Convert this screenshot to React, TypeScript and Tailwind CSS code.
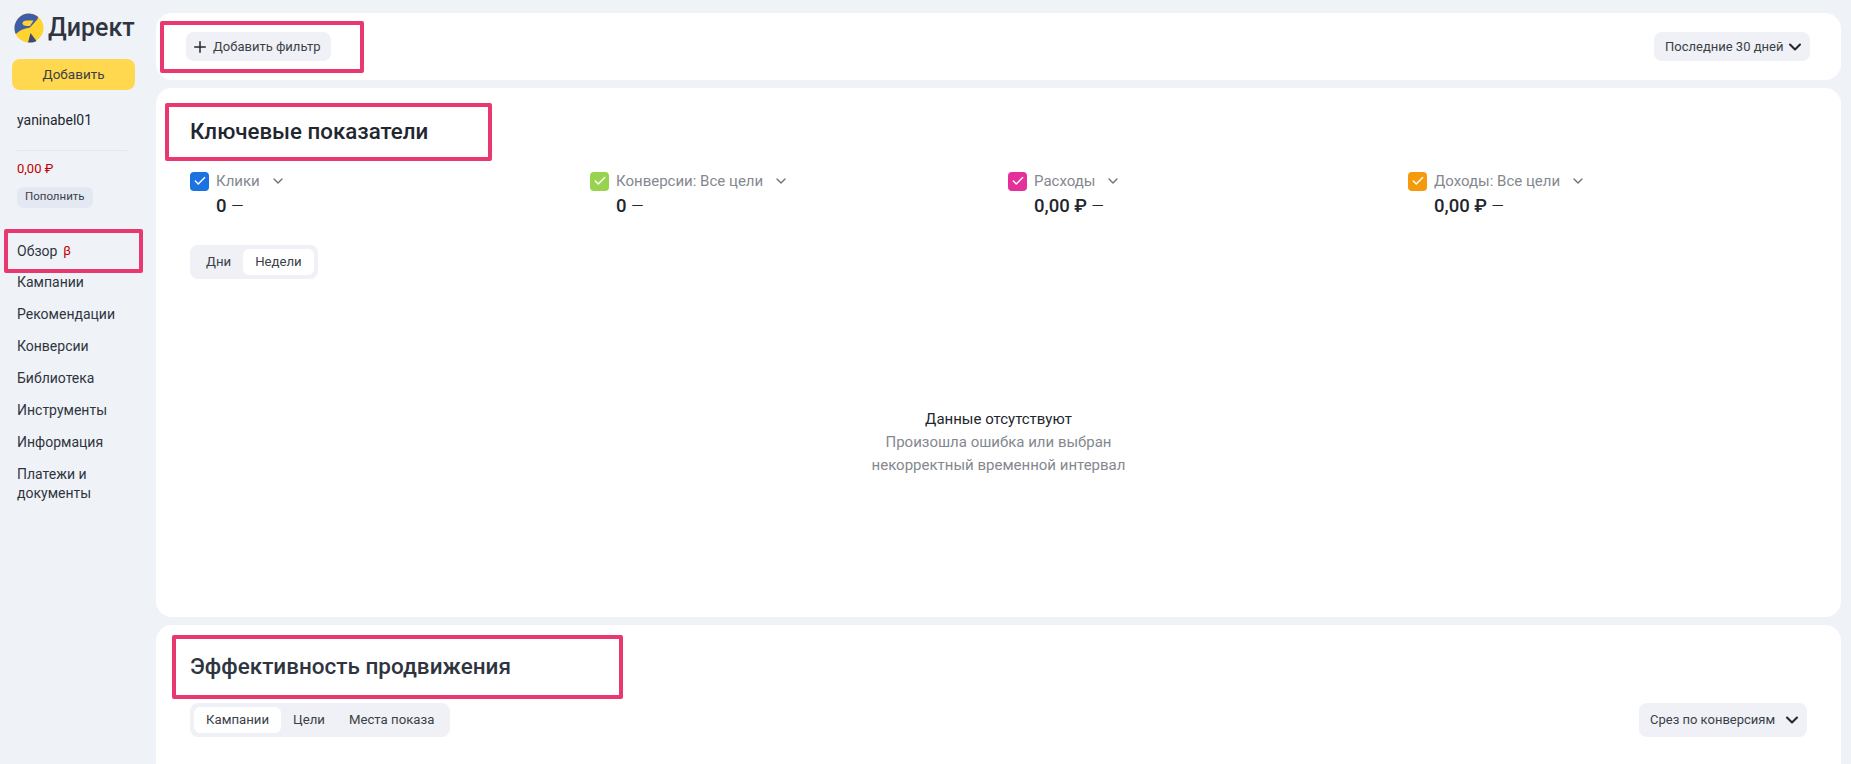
import { Check, ChevronDown, Plus } from 'lucide-react';

const navItems = ['Кампании', 'Рекомендации', 'Конверсии', 'Библиотека', 'Инструменты', 'Информация'];

const metrics = [
  { label: 'Клики', value: '0', color: 'bg-[#1a73e0]', width: 'w-[400px]' },
  { label: 'Конверсии: Все цели', value: '0', color: 'bg-[#97d34f]', width: 'w-[418px]' },
  { label: 'Расходы', value: '0,00 ₽', color: 'bg-[#e5309b]', width: 'w-[400px]' },
  { label: 'Доходы: Все цели', value: '0,00 ₽', color: 'bg-[#f59a0c]', width: 'w-[400px]' },
];

function Logo() {
  return (
    <svg viewBox="0 0 30 30" className="w-[30px] h-[30px] shrink-0">
      <circle cx="15" cy="15" r="14.5" fill="#ffd42e" />
      <path d="M15 .5A14.500 14.500 0 0 0 .7 17.500C.9 19 1.300 20 1.800 21 5 17.500 10 15.500 16 14.500l5-5.500C24 6 24.500 5 23.500 3.300A14.500 14.500 0 0 0 15 .5Z" fill="#3f5ca8" />
      <path d="M19.500 7.500H13c-3 0-4.500 1.300-4.500 2.800s1.500 2.700 4.500 2.700h3Z" fill="#ffd42e" />
      <path d="M14 29.400c3 .5 6 0 8.500-1.500L16.500 20Z" fill="#3d4a78" />
    </svg>
  );
}

function Segments({ items, active }: { items: string[]; active: string }) {
  return (
    <div className="flex items-center h-[34px] p-[4px] rounded-lg bg-[#eff1f7] w-fit">
      {items.map((item) => (
        <div
          key={item}
          className={`h-[26px] px-[12px] flex items-center rounded-md text-[13.2px] text-[#3b3f46] ${
            item === active ? 'bg-white' : ''
          }`}
        >
          {item}
        </div>
      ))}
    </div>
  );
}

function Select({ label, className }: { label: string; className: string }) {
  return (
    <div className={`flex items-center justify-between rounded-lg bg-[#eff1f7] text-[13px] text-[#3b3f46] whitespace-nowrap pl-[11px] pr-[5px] ${className}`}>
      <span>{label}</span>
      <ChevronDown className="w-[20px] h-[20px] text-[#22262e]" strokeWidth={2.5} />
    </div>
  );
}

function Annotation({ className }: { className: string }) {
  return <div className={`absolute border-[4px] border-[#e8386f] rounded-[2px] pointer-events-none ${className}`} />;
}

export default function App() {
  return (
    <div className="relative flex h-[764px] w-full overflow-hidden bg-[#eff3f8] font-['Roboto',sans-serif] text-[#22262e]">
      <aside className="w-[156px] shrink-0 pt-[13px] pl-[12px]">
        <div className="flex items-center gap-[4px] pl-[2px] h-[29px]">
          <Logo />
          <span className="text-[25px] font-medium text-[#2f3540]">Директ</span>
        </div>
        <div className="mt-[17px] w-[123px] h-[31px] rounded-lg bg-[#ffd84f] flex items-center justify-center text-[13.5px] text-[#3b3f46]">
          Добавить
        </div>
        <div className="mt-[20px] pl-[5px] text-[14px]">yaninabel01</div>
        <div className="mt-[19px] ml-[5px] w-[110px] h-px bg-[#e3e8f0]" />
        <div className="mt-[8px] pl-[5px] text-[13px] text-[#c00000]">0,00 ₽</div>
        <div className="mt-[8px] ml-[5px] w-fit h-[21px] px-[8px] rounded-md bg-[#e4e8f3] flex items-center text-[11.5px] text-[#3b3f46]">
          Пополнить
        </div>
        <nav className="mt-[28px] pl-[5px] text-[14px] text-[#2f3540]">
          <div className="h-[31px] flex items-center gap-[6px]">
            Обзор <span className="text-[#c00000] text-[13px]">β</span>
          </div>
          {navItems.map((item) => (
            <div key={item} className="h-[32px] flex items-center">
              {item}
            </div>
          ))}
          <div className="mt-[6px] leading-[19px]">
            Платежи и
            <br />
            документы
          </div>
        </nav>
      </aside>

      <main className="w-[1685px] shrink-0 pt-[13px] flex flex-col gap-[8px]">
        <section className="h-[67px] shrink-0 rounded-2xl bg-white pl-[30px] pr-[31px] flex items-center justify-between">
          <div className="h-[29px] pl-[5px] pr-[10px] rounded-lg bg-[#eff1f7] flex items-center gap-[4px] text-[13px] text-[#3b3f46]">
            <Plus className="w-[18px] h-[18px] text-[#22262e]" strokeWidth={2} />
            Добавить фильтр
          </div>
          <Select label="Последние 30 дней" className="h-[29px] w-[156px]" />
        </section>

        <section className="h-[529px] shrink-0 rounded-2xl bg-white pl-[34px] pr-[34px] pt-[28px] flex flex-col">
          <h2 className="text-[22.3px] leading-[30px] font-medium text-[#22262e]">Ключевые показатели</h2>
          <div className="flex mt-[25px]">
            {metrics.map((m) => (
              <div key={m.label} className={`shrink-0 ${m.width}`}>
                <div className="flex items-center h-[20px]">
                  <span className={`w-[19px] h-[19px] rounded-[4px] flex items-center justify-center ${m.color}`}>
                    <Check className="w-[14px] h-[14px] text-white" strokeWidth={2.5} />
                  </span>
                  <span className="ml-[7px] text-[15px] text-[#84888f]">{m.label}</span>
                  <ChevronDown className="ml-[10px] w-[16px] h-[16px] text-[#6c7079]" strokeWidth={2} />
                </div>
                <div className="ml-[26px] mt-[3px] text-[18.5px] leading-[24px] font-medium">
                  {m.value} <span className="font-light text-[16px]">—</span>
                </div>
              </div>
            ))}
          </div>
          <div className="mt-[26px]">
            <Segments items={['Дни', 'Недели']} active="Недели" />
          </div>
          <div className="mt-[129px] text-center text-[15px] leading-[23px]">
            <div className="text-[#22262e]">Данные отсутствуют</div>
            <div className="text-[#84888f]">Произошла ошибка или выбран</div>
            <div className="text-[#84888f]">некорректный временной интервал</div>
          </div>
        </section>

        <section className="flex-1 rounded-t-2xl bg-white pl-[34px] pr-[34px] pt-[26px]">
          <h2 className="text-[22.5px] leading-[30px] font-medium text-[#2f3540]">Эффективность продвижения</h2>
          <div className="mt-[22px] flex items-center justify-between">
            <Segments items={['Кампании', 'Цели', 'Места показа']} active="Кампании" />
            <Select label="Срез по конверсиям" className="h-[34px] w-[168px]" />
          </div>
        </section>
      </main>

      <Annotation className="left-[4px] top-[229px] w-[139px] h-[44px]" />
      <Annotation className="left-[160px] top-[21px] w-[204px] h-[52px]" />
      <Annotation className="left-[165px] top-[103px] w-[327px] h-[58px]" />
      <Annotation className="left-[172px] top-[635px] w-[451px] h-[64px]" />
    </div>
  );
}
